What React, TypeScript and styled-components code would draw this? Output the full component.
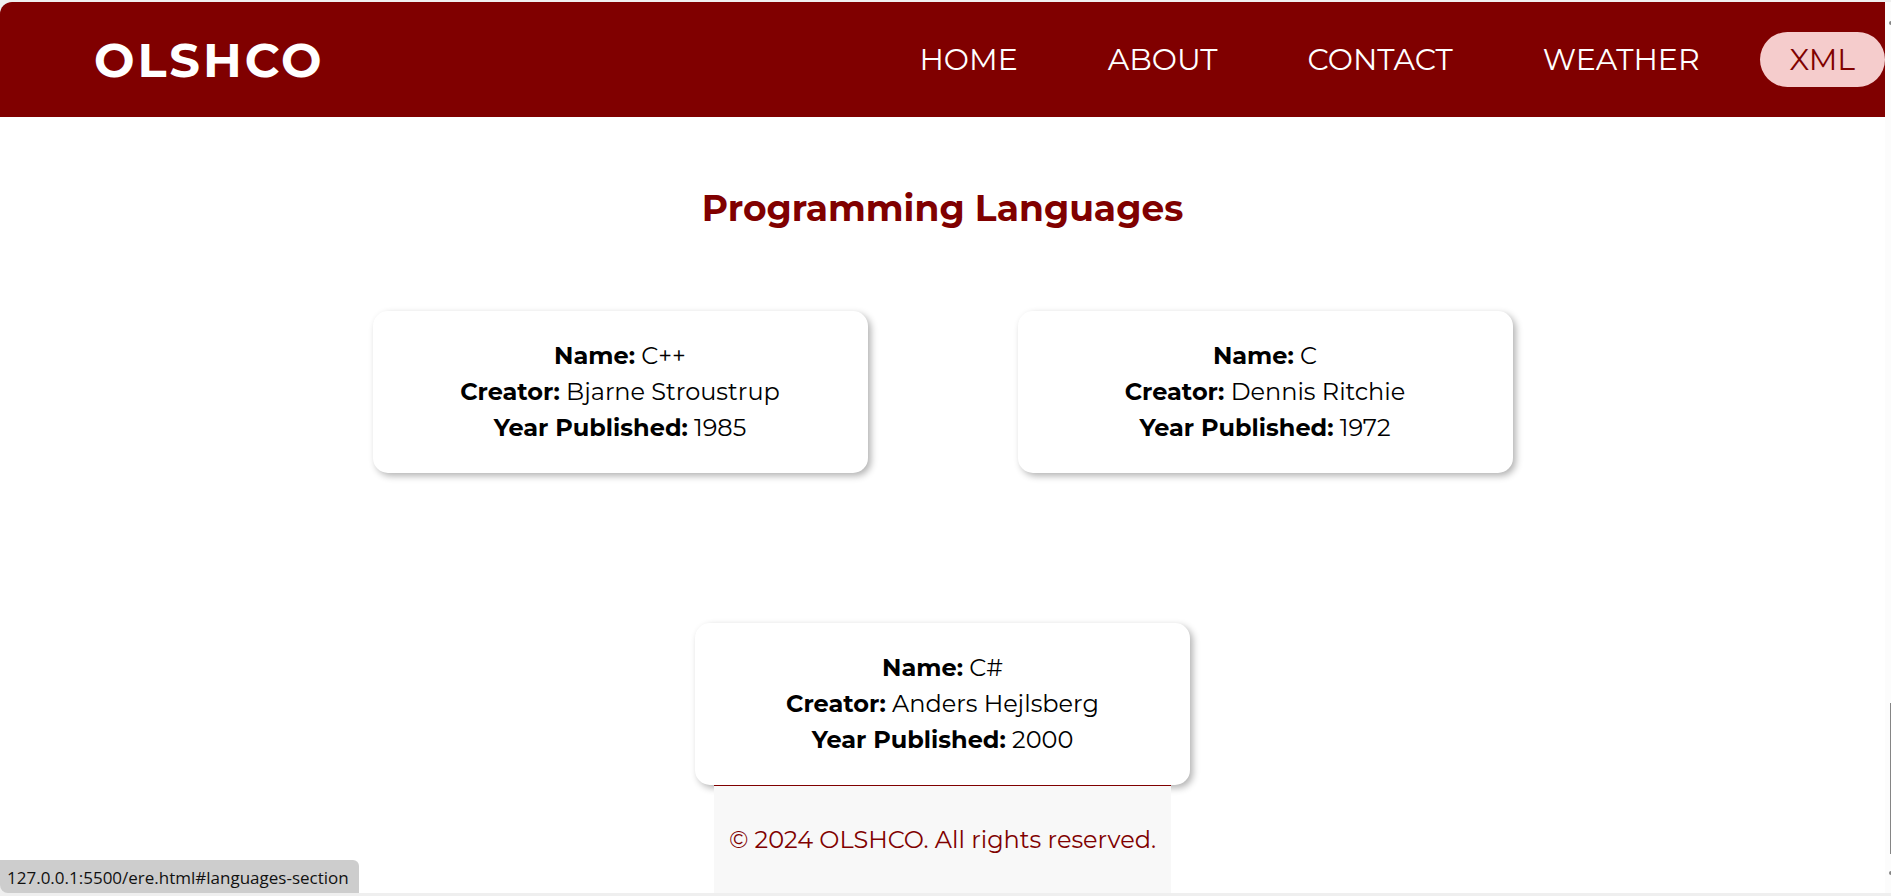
import React from "react";
import styled, { createGlobalStyle } from "styled-components";

const MAROON = "#800000";

const GlobalStyle = createGlobalStyle`
  *, *::before, *::after { box-sizing: border-box; }
  body {
    margin: 0;
    overflow: hidden;
    background: #efefef;
    font-family: Montserrat, Inter, "Liberation Sans", sans-serif;
  }
`;

const Frame = styled.div`
  position: relative;
  display: flex;
  height: 100vh;
  padding: 2px 0 3px;
  background: #efefef;
`;

const Viewport = styled.div`
  flex: 1;
  min-width: 0;
  overflow: hidden;
  display: flex;
  flex-direction: column;
  background: #fff;
  border-radius: 12px 0 0 12px;
`;

const ScrollGutter = styled.div`
  flex: 0 0 6px;
  display: flex;
  flex-direction: column;
  align-items: flex-end;
  padding: 19px 0 18px;
  background: #fcfcfc;
`;

const Thumb = styled.div`
  width: 1px;
  height: 151px;
  margin: auto 0 17px;
  background: #858585;
`;

const Arrow = styled.div`
  width: 2px;
  height: 4px;
  border-radius: 2px 0 0 2px;
  background: #858585;
`;

const Header = styled.header`
  flex: none;
  display: flex;
  align-items: center;
  justify-content: space-between;
  height: 115px;
  padding-left: 94px;
  background: ${MAROON};
`;

const Logo = styled.a`
  color: #fff;
  font-size: 48px;
  line-height: 60px;
  font-weight: 700;
  letter-spacing: 3px;
  text-decoration: none;
`;

const Nav = styled.nav`
  display: flex;
  gap: 30px;
  padding-bottom: 1px;
`;

const NavLink = styled.a<{ $active?: boolean }>`
  padding: 8px 30px;
  border-radius: 28px;
  font-size: 30px;
  line-height: 39px;
  font-weight: 400;
  text-decoration: none;
  color: ${(p) => (p.$active ? MAROON : "#fff")};
  background: ${(p) => (p.$active ? "#f5cccc" : "transparent")};
`;

const Main = styled.main`
  flex: none;
  display: flex;
  flex-direction: column;
  align-items: center;
  padding-top: 67px;
`;

const Title = styled.h1`
  margin: 0 0 79px;
  color: ${MAROON};
  font-size: 36px;
  line-height: 48px;
  font-weight: 700;
`;

const Cards = styled.section`
  display: flex;
  flex-wrap: wrap;
  justify-content: center;
  gap: 150px;
  width: 100%;
  max-width: 1200px;
`;

const Card = styled.article`
  width: 495px;
  padding: 27px 20px;
  border-radius: 15px;
  background: #fff;
  box-shadow: 3px 3px 7px rgba(0, 0, 0, 0.3);
  text-align: center;
`;

const Line = styled.p`
  margin: 0;
  color: #000;
  font-size: 24px;
  line-height: 36px;
  font-weight: 400;
`;

const Label = styled.strong`
  font-weight: 700;
`;

const Footer = styled.footer`
  flex: none;
  align-self: center;
  position: relative;
  padding: 36px 15px;
  border-top: 1px solid ${MAROON};
  background: #f8f8f8;
  color: ${MAROON};
  font-size: 24px;
  line-height: 36px;
  font-weight: 400;
`;

const StatusBar = styled.div`
  position: absolute;
  left: 0;
  bottom: 3px;
  height: 33px;
  padding: 0 10px 0 7px;
  border-radius: 0 6px 0 8px;
  background: #cdcdcd;
  color: #111;
  font-family: "Segoe UI", "Open Sans", "Noto Sans", sans-serif;
  font-size: 17px;
  line-height: 35px;
`;

const links = ["HOME", "ABOUT", "CONTACT", "WEATHER", "XML"];

const languages = [
  { name: "C++", creator: "Bjarne Stroustrup", year: 1985 },
  { name: "C", creator: "Dennis Ritchie", year: 1972 },
  { name: "C#", creator: "Anders Hejlsberg", year: 2000 },
];

export default function App() {
  return (
    <>
      <GlobalStyle />
      <Frame>
        <Viewport>
          <Header>
            <Logo href="#home">OLSHCO</Logo>
            <Nav>
              {links.map((label) => (
                <NavLink
                  key={label}
                  href={label === "XML" ? "#languages-section" : `#${label.toLowerCase()}`}
                  $active={label === "XML"}
                >
                  {label}
                </NavLink>
              ))}
            </Nav>
          </Header>
          <Main id="languages-section">
            <Title>Programming Languages</Title>
            <Cards>
              {languages.map((l) => (
                <Card key={l.name}>
                  <Line><Label>Name:</Label> {l.name}</Line>
                  <Line><Label>Creator:</Label> {l.creator}</Line>
                  <Line><Label>Year Published:</Label> {l.year}</Line>
                </Card>
              ))}
            </Cards>
          </Main>
          <Footer>© 2024 OLSHCO. All rights reserved.</Footer>
        </Viewport>
        <ScrollGutter>
          <Arrow />
          <Thumb />
          <Arrow />
        </ScrollGutter>
        <StatusBar>127.0.0.1:5500/ere.html#languages-section</StatusBar>
      </Frame>
    </>
  );
}
